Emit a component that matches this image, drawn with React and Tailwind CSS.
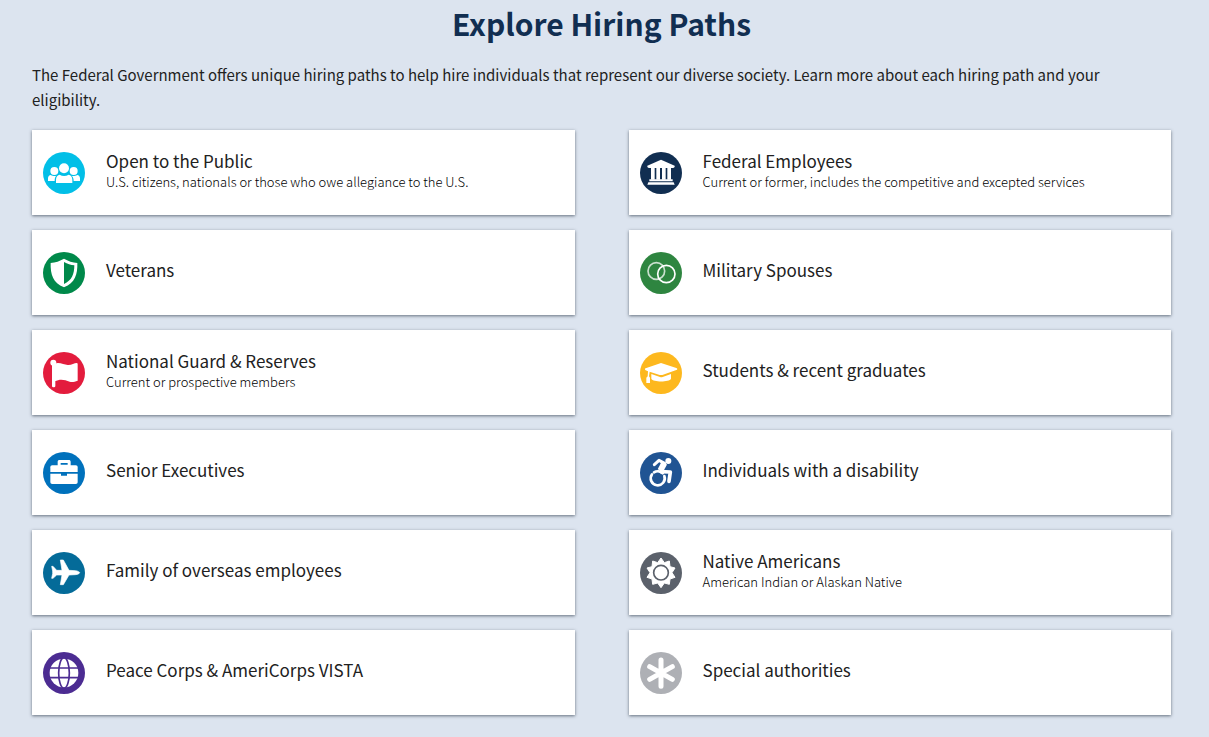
import React from "react";

const icons = {
  public: (
    <g fill="#fff">
      <circle cx="63" cy="49" r="15" />
      <circle cx="34" cy="57" r="12" />
      <circle cx="92" cy="57" r="12" />
      <path d="M39 93V83c0-9 5-14 11-15 8 5 18 5 27 0 6 1 11 6 11 15v10z" />
      <path d="M15 87v-8c0-6 4-10 8-10 7 4 14 4 17 2-4 4-5 8-5 16z" />
      <path d="M111 87v-8c0-6-4-10-8-10-7 4-14 4-17 2 4 4 6 8 6 16z" />
    </g>
  ),
  veterans: (
    <>
      <path fill="#fff" d="M63 20c12 7 26 12 40 13 1 34-7 60-40 73-33-13-41-39-40-73 14-1 28-6 40-13z" />
      <path fill="#00894a" d="M63 30c10 5 20 9 31 10 0 27-8 46-31 56z" />
    </>
  ),
  guard: (
    <g fill="#fff">
      <circle cx="31" cy="32" r="9" />
      <rect x="27" y="31" width="10" height="75" rx="4" />
      <path d="M35 35c13-6 28 3 39 4 11 1 20-6 27-6 2 0 3 1 3 3v50c-9 3-16 5-24 3-14-5-27-10-45-1z" />
    </g>
  ),
  executives: (
    <g fill="#fff">
      <path fillRule="evenodd" d="M44 42V30c0-4 2-6 6-6h27c4 0 6 2 6 6v12zM53 33v5h21v-5z" />
      <path d="M28 40h70c4 0 6 2 6 6v14H22V46c0-4 2-6 6-6z" />
      <path d="M22 65h32v6h18v-6h32v25c0 4-2 6-6 6H28c-4 0-6-2-6-6z" />
    </g>
  ),
  overseas: (
    <path
      fill="#fff"
      stroke="#fff"
      strokeWidth="2"
      strokeLinejoin="round"
      d="M26 43h4l11 12h16l-5-31h9l17 31 19 1c8 1 13 4 13 6s-5 5-13 6l-19 1-17 29h-9l5-29H41L30 79h-4l3-14v-8z"
    />
  ),
  peace: (
    <>
      <circle cx="63" cy="63" r="43" fill="#fff" />
      <g fill="none" stroke="#4c2c92" strokeWidth="5">
        <ellipse cx="63" cy="63" rx="16" ry="46" />
        <path d="M20 48h86M20 77h86" />
      </g>
    </>
  ),
  federal: (
    <g fill="#fff">
      <path d="M63 23l41 18v4l-4 3H26l-4-3v-4z" />
      <path d="M33 48h11v35H33zM49 48h11v35H49zM66 48h11v35H66zM82 48h11v35H82z" />
      <path d="M28 82h70v6H28zM25 91h76l3 7H22z" />
    </g>
  ),
  spouses: (
    <g fill="none" stroke="#fff" strokeWidth="5">
      <circle cx="49" cy="57" r="25" opacity="0.75" />
      <circle cx="79" cy="66" r="26" />
    </g>
  ),
  students: (
    <g fill="#fff">
      <path d="M63 33l46 15c4 2 4 5 0 6L67 69h-8L29 59l-2 14 3 4v16H19V77l4-4 1-15-7-3c-3-2-3-5 0-6z" />
      <path d="M34 66l26 9c3 1 5 1 8 0l25-9v14c-5 11-54 11-59 0z" />
    </g>
  ),
  disability: (
    <>
      <circle cx="85" cy="27" r="9" fill="#fff" />
      <g fill="none" stroke="#fff" strokeLinecap="round" strokeLinejoin="round">
        <path strokeWidth="9" d="M43 38l14-13 17 9" />
        <path strokeWidth="18" strokeLinecap="butt" d="M73 33L61 56" />
        <path strokeWidth="11" d="M63 59l28 1-4 28" />
        <path strokeWidth="8" d="M36 67a21 21 0 1 0 37 5" />
        <path strokeWidth="8" d="M42 61a21 21 0 0 1 26 3" />
      </g>
    </>
  ),
  native: (
    <>
      <path
        fill="#fff"
        stroke="#fff"
        strokeWidth="3"
        strokeLinejoin="round"
        d="M63 18l10 14 15-5 2 17 15 4-9 14 9 14-15 5-2 16-15-4-10 14-10-14-15 4-2-16-15-5 9-14-9-14 15-4 2-17 15 5z"
      />
      <circle cx="63" cy="62" r="22" fill="none" stroke="#5b616b" strokeWidth="5" />
    </>
  ),
  special: (
    <path stroke="#fff" strokeWidth="15" strokeLinecap="round" d="M63 24v79M29 44l68 38M97 44L29 82" />
  ),
};

const paths = [
  { icon: "public", color: "#02bfe7", title: "Open to the Public", note: "U.S. citizens, nationals or those who owe allegiance to the U.S." },
  { icon: "federal", color: "#112e51", title: "Federal Employees", note: "Current or former, includes the competitive and excepted services" },
  { icon: "veterans", color: "#00894a", title: "Veterans" },
  { icon: "spouses", color: "#2e8540", title: "Military Spouses" },
  { icon: "guard", color: "#e31c3d", title: "National Guard & Reserves", note: "Current or prospective members" },
  { icon: "students", color: "#fdb81e", title: "Students & recent graduates" },
  { icon: "executives", color: "#0071bc", title: "Senior Executives" },
  { icon: "disability", color: "#205493", title: "Individuals with a disability" },
  { icon: "overseas", color: "#046b99", title: "Family of overseas employees" },
  { icon: "native", color: "#5b616b", title: "Native Americans", note: "American Indian or Alaskan Native" },
  { icon: "peace", color: "#4c2c92", title: "Peace Corps & AmeriCorps VISTA" },
  { icon: "special", color: "#aeb0b5", title: "Special authorities" },
];

const PathCard = ({ path }) => (
  <li>
    <a href="#" className="flex h-[85px] items-center gap-[21px] bg-white pt-px pl-[11px] pr-4 shadow-[0_1px_3px_rgba(50,60,75,0.7)]">
      <svg viewBox="0 0 126 126" className="size-[42px] shrink-0" aria-hidden="true">
        <circle cx="63" cy="63" r="63" fill={path.color} />
        {icons[path.icon]}
      </svg>
      <span className="flex flex-col pb-[6px]">
        <span className="text-[17px] leading-6">{path.title}</span>
        {path.note && <span className="text-[13px] leading-[18px] font-light text-black">{path.note}</span>}
      </span>
    </a>
  </li>
);

export default function App() {
  return (
    <main className="min-h-screen bg-[#dce4ef] pb-[22px] pl-8 pr-[38px] font-['Noto_Sans_CJK_JP','Noto_Sans_CJK_SC',sans-serif] text-[#212121]">
      <h1 className="pt-[2px] text-center text-[30px] leading-[42px] font-bold text-[#112e51]">Explore Hiring Paths</h1>
      <p className="mt-[18px] pr-8 text-[15px] leading-[25px]">
        The Federal Government offers unique hiring paths to help hire individuals that represent our diverse society. Learn
        more about each hiring path and your eligibility.
      </p>
      <ul className="mt-[18px] grid grid-cols-2 gap-x-[54px] gap-y-[15px]">
        {paths.map((path) => (
          <PathCard key={path.icon} path={path} />
        ))}
      </ul>
    </main>
  );
}
